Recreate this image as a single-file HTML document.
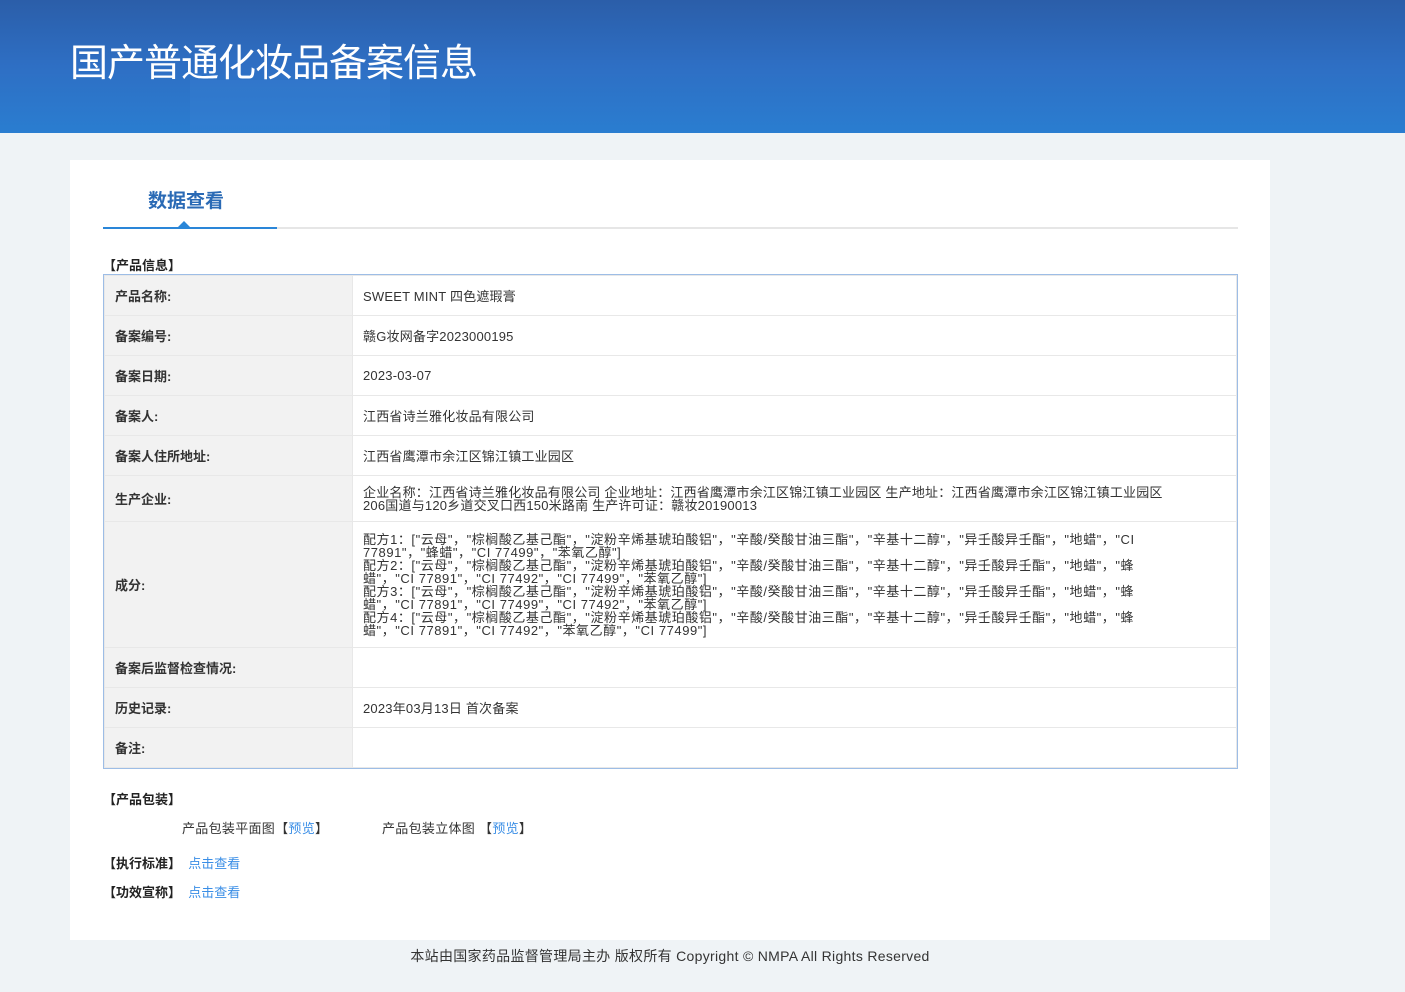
<!DOCTYPE html>
<html><head><meta charset="utf-8"><style>
*{margin:0;padding:0;box-sizing:border-box}
body{width:1405px;height:992px;background:#eff3f6;font-family:"Liberation Sans","Noto Sans CJK SC",sans-serif;color:#333;position:relative;overflow:hidden;font-size:13px}
.hdr{position:absolute;left:0;top:0;width:1405px;height:133px;background:linear-gradient(180deg,#2b5ea9 0%,#2e6fc4 50%,#2a7dd0 100%)}
.hdr .p{position:absolute;left:190px;top:80px;width:200px;height:53px;background:#3a80d5;opacity:.3}
.hdr h1{position:absolute;left:70px;top:32px;font-size:38px;font-weight:normal;color:#fff;letter-spacing:-1px;font-family:"Noto Sans CJK SC",sans-serif}
.card{position:absolute;left:70px;top:160px;width:1200px;height:780px;background:#fff}
.tab{position:absolute;left:148px;top:186px;font-size:19px;font-weight:bold;color:#2a6ab5}
.line{position:absolute;left:103px;top:227px;width:1135px;height:2px;background:#e6e6e6}
.line2{position:absolute;left:103px;top:227px;width:174px;height:2px;background:#2a86d8}
.tri{position:absolute;left:178px;top:221px;width:0;height:0;border-left:6px solid transparent;border-right:6px solid transparent;border-bottom:6px solid #2a86d8}
.sec{position:absolute;font-size:13px;font-weight:bold;color:#222}
table{position:absolute;left:104px;top:275px;width:1133px;border-collapse:collapse;outline:1px solid #9dbde6}
td{border:1px solid #e8e8e8;font-size:13px;vertical-align:middle}
td.l{width:248px;background:#f2f2f2;font-weight:bold;padding-left:10px;color:#333}
td.v{padding-left:10px;color:#333;letter-spacing:0.2px}
td.ing{line-height:13px;font-size:13px;letter-spacing:0.55px}
a{color:#3a8ee6;text-decoration:none}
.ft{position:absolute;top:946px;left:0;width:1340px;text-align:center;font-size:14px;color:#333;letter-spacing:0.3px}
</style></head><body>
<div class="hdr"><div class="p"></div><h1>国产普通化妆品备案信息</h1></div>
<div class="card"></div>
<div class="tab">数据查看</div>
<div class="line"></div><div class="line2"></div><div class="tri"></div>
<div class="sec" style="left:103px;top:255px">【产品信息】</div>
<table>
<tr style="height:40px"><td class="l">产品名称:</td><td class="v">SWEET MINT 四色遮瑕膏</td></tr>
<tr style="height:40px"><td class="l">备案编号:</td><td class="v">赣G妆网备字2023000195</td></tr>
<tr style="height:40px"><td class="l">备案日期:</td><td class="v">2023-03-07</td></tr>
<tr style="height:40px"><td class="l">备案人:</td><td class="v">江西省诗兰雅化妆品有限公司</td></tr>
<tr style="height:40px"><td class="l">备案人住所地址:</td><td class="v">江西省鹰潭市余江区锦江镇工业园区</td></tr>
<tr style="height:46px"><td class="l">生产企业:</td><td class="v" style="line-height:13px">企业名称：江西省诗兰雅化妆品有限公司 企业地址：江西省鹰潭市余江区锦江镇工业园区 生产地址：江西省鹰潭市余江区锦江镇工业园区<br>206国道与120乡道交叉口西150米路南 生产许可证：赣妆20190013</td></tr>
<tr style="height:126px"><td class="l">成分:</td><td class="v ing">配方1：["云母"，"棕榈酸乙基己酯"，"淀粉辛烯基琥珀酸铝"，"辛酸/癸酸甘油三酯"，"辛基十二醇"，"异壬酸异壬酯"，"地蜡"，"CI<br>77891"，"蜂蜡"，"CI 77499"，"苯氧乙醇"]<br>配方2：["云母"，"棕榈酸乙基己酯"，"淀粉辛烯基琥珀酸铝"，"辛酸/癸酸甘油三酯"，"辛基十二醇"，"异壬酸异壬酯"，"地蜡"，"蜂<br>蜡"，"CI 77891"，"CI 77492"，"CI 77499"，"苯氧乙醇"]<br>配方3：["云母"，"棕榈酸乙基己酯"，"淀粉辛烯基琥珀酸铝"，"辛酸/癸酸甘油三酯"，"辛基十二醇"，"异壬酸异壬酯"，"地蜡"，"蜂<br>蜡"，"CI 77891"，"CI 77499"，"CI 77492"，"苯氧乙醇"]<br>配方4：["云母"，"棕榈酸乙基己酯"，"淀粉辛烯基琥珀酸铝"，"辛酸/癸酸甘油三酯"，"辛基十二醇"，"异壬酸异壬酯"，"地蜡"，"蜂<br>蜡"，"CI 77891"，"CI 77492"，"苯氧乙醇"，"CI 77499"]</td></tr>
<tr style="height:40px"><td class="l">备案后监督检查情况:</td><td class="v"></td></tr>
<tr style="height:40px"><td class="l">历史记录:</td><td class="v">2023年03月13日 首次备案</td></tr>
<tr style="height:40px"><td class="l">备注:</td><td class="v"></td></tr>
</table>
<div class="sec" style="left:103px;top:789px">【产品包装】</div>
<div style="position:absolute;left:182px;top:818px;letter-spacing:0.3px">产品包装平面图【<a>预览</a>】</div>
<div style="position:absolute;left:382px;top:818px;letter-spacing:0.3px">产品包装立体图 【<a>预览</a>】</div>
<div class="sec" style="left:103px;top:853px">【执行标准】 &nbsp;<a style="font-weight:normal">点击查看</a></div>
<div class="sec" style="left:103px;top:882px">【功效宣称】 &nbsp;<a style="font-weight:normal">点击查看</a></div>
<div class="ft">本站由国家药品监督管理局主办 版权所有 Copyright © NMPA All Rights Reserved</div>
</body></html>
